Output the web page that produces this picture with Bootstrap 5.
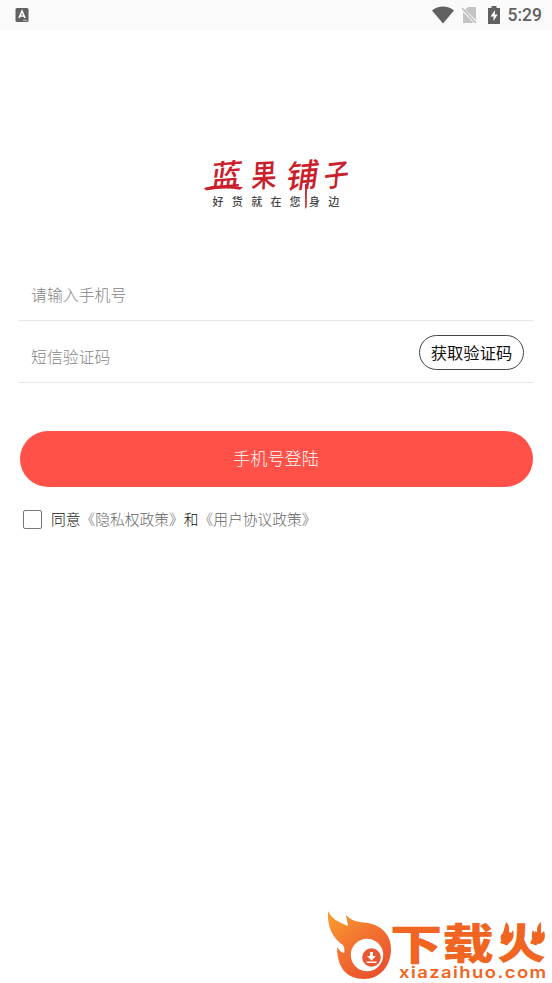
<!DOCTYPE html>
<html lang="zh-CN">
<head>
<meta charset="utf-8">
<meta name="viewport" content="width=device-width, initial-scale=1">
<title>蓝果铺子</title>
<link href="https://cdn.jsdelivr.net/npm/bootstrap@5.3.0/dist/css/bootstrap.min.css" rel="stylesheet">
<style>
body{font-family:"Noto Sans CJK SC",sans-serif;font-weight:300;background:#fff;color:#111}
.screen{height:983px}
.status-bar{height:30px;background:#fafafa;padding:0 10px 0 15px;color:#616161}
.status-bar .clock{font:500 17.5px/30px Roboto,sans-serif;margin-left:8px}
.icon-sim{margin-left:7px}
.icon-battery{margin-left:10px}
.brand{margin-top:121px;height:65px}
.field-row{margin:0 19px;border-bottom:1px solid #e6e6e6;padding:0 9px 0 12px}
.field-phone{margin-top:54px;height:51px}
.field-code{height:62px;padding-top:1px}
.field-code .form-control{margin-top:10px}
.field-row .form-control{font-size:15.9px;line-height:24px;font-weight:300;box-shadow:none}
.field-row .form-control::placeholder{color:#858585;opacity:1}
.btn-code{width:105px;height:35px;border:1px solid #444;font-size:16.3px;line-height:1;color:#111;font-weight:400}
.btn-login{margin:48px 19.5px 0;height:56px;background:#ff5147;color:#fff;font-size:17.2px;font-weight:300;line-height:1;padding-bottom:9px}
.agree{margin:21px 0 0 23px;font-size:14.75px;line-height:22px}
.agree .form-check-input{width:19px;height:19px;border:1px solid #777;border-radius:2px}
.agree label{margin-left:9px}
.agree a{color:#666}
.site-mark{height:78px}
</style>
<script src="https://cdn.jsdelivr.net/npm/bootstrap@5.3.0/dist/js/bootstrap.bundle.min.js"></script>
</head>
<body>
<div class="screen d-flex flex-column overflow-hidden">
  <header class="status-bar d-flex align-items-center flex-shrink-0">
    <svg width="14" height="14" viewBox="0 0 14 14"><rect x=".5" width="13" height="14" rx="1.5" fill="#616161"/><path d="M4 10 7 3l3 7M5 8h4" fill="none" stroke="#fff" stroke-width="1.6"/><path d="M8 12.3h4" stroke="#ddd" stroke-width=".8"/></svg>
    <svg class="ms-auto" width="22" height="18" viewBox="0 0 22 18"><path d="M0 4.500C6-.8 16-.8 22 4.500L11 17.500Z" fill="#616161"/></svg>
    <svg class="icon-sim" width="17" height="18" viewBox="0 0 17 18"><path d="M7 1h8v13L4 3.800ZM2 6l11 11H2Z" fill="#c4c4c4"/><path d="m1 2 14 15" stroke="#bbb" stroke-width="1.500"/></svg>
    <svg class="icon-battery" width="12" height="18" viewBox="0 0 12 18"><path d="M0 2h3.500V0h5v2H12v16H0Z" fill="#616161"/><path d="M7 4 2.500 10.500H5.500V15L9.700 8.500H6.800Z" fill="#fff"/></svg>
    <span class="clock">5:29</span>
  </header>

  <main>
    <div class="brand d-flex justify-content-center">
      <svg width="160" height="65" viewBox="196 151 160 65" overflow="visible" role="img" aria-label="蓝果铺子">
        <g fill="#c9202b" font-weight="500" font-family="Noto Sans CJK SC, sans-serif">
          <text transform="matrix(1.040 -.08 -.15 1 209 187)" font-size="30">蓝</text>
          <text transform="matrix(.84 -.05 -.05 1.050 251 187.500)" font-size="30">果</text>
          <text transform="matrix(.98 -.1 -.14 .98 285 189)" font-size="33">铺</text>
          <text transform="matrix(.86 -.1 -.1 1.050 323 187.500)" font-size="29">子</text>
        </g>
        <path d="M204 188c10-3 25-2 39-1l-3 2.700c-12-2-23-1-34 .8ZM305 184h2l-.3 23-1.500 2Z" fill="#c9202b"/>
        <text x="212.500 231.800 251.200 270.500 289.600 309 328.300" y="206" font-size="11" font-weight="500" fill="#444">好货就在您身边</text>
      </svg>
    </div>

    <form>
      <div class="field-row field-phone d-flex align-items-center">
        <input class="form-control border-0 p-0 bg-transparent" type="tel" placeholder="请输入手机号">
      </div>
      <div class="field-row field-code d-flex align-items-center">
        <input class="form-control border-0 p-0 bg-transparent flex-fill" type="text" placeholder="短信验证码">
        <button class="btn btn-code rounded-pill p-0 flex-shrink-0" type="button">获取验证码</button>
      </div>
      <div class="d-grid"><button class="btn btn-login rounded-pill border-0" type="button">手机号登陆</button></div>
      <div class="agree d-flex align-items-center">
        <input class="form-check-input m-0 flex-shrink-0" type="checkbox" id="agree">
        <label for="agree"><span>同意</span><a class="text-decoration-none" href="#">《隐私权政策》</a><span>和</span><a class="text-decoration-none" href="#">《用户协议政策》</a></label>
      </div>
    </form>
  </main>

  <footer class="site-mark mt-auto d-flex justify-content-end flex-shrink-0">
    <svg width="228" height="78" viewBox="324 905 228 78">
      <defs><linearGradient id="flame" x1="0" y1="0" x2=".7" y2="1"><stop stop-color="#f9a02f"/><stop offset=".5" stop-color="#f37431"/><stop offset="1" stop-color="#e9512d"/></linearGradient></defs>
      <path d="M328 911C332 919 338 922 348 926Q347 920 346 915C352 921 357 922 368 923C384 926 391 937 391 949C391 966 380 979 364 979C347 979 337 968 337 947Q340 952 344 953Q345 948 343 945C332 938 327 926 328 911Z" fill="url(#flame)"/>
      <circle cx="367" cy="955" r="16.200" fill="#fff"/><circle cx="371.500" cy="957.500" r="9.300" fill="#e95830"/>
      <path d="M370 952h3v4h3l-4.500 4.500L367 956h3ZM366.500 961.500h10v1.500h-10Z" fill="#fff"/>
      <g fill="#f16522" font-family="Noto Sans CJK SC, sans-serif" font-weight="900">
        <text transform="translate(390 959.500) scale(1.230 1)" font-size="42.500">下</text>
        <text transform="translate(442.500 959) scale(1.220 1)" font-size="42">载</text>
        <text transform="translate(497 959) scale(1.160 1)" font-size="42">火</text>
      </g>
      <path d="M506 922c6 6 1 9 4 13l3-5c2 7-1 13-7 14-6-2-7-8-3-11ZM541 922c-7 6-2 10-5 13l-3-5c-3 7 0 13 6 14 6-2 7-8 5-13l-3 3Z" fill="#f16522"/>
      <text transform="translate(399 978) scale(1.150 1)" textLength="128" lengthAdjust="spacing" font-family="Inter, sans-serif" font-size="16" font-weight="600" fill="#f16522">xiazaihuo.com</text>
    </svg>
  </footer>
</div>
</body>
</html>
